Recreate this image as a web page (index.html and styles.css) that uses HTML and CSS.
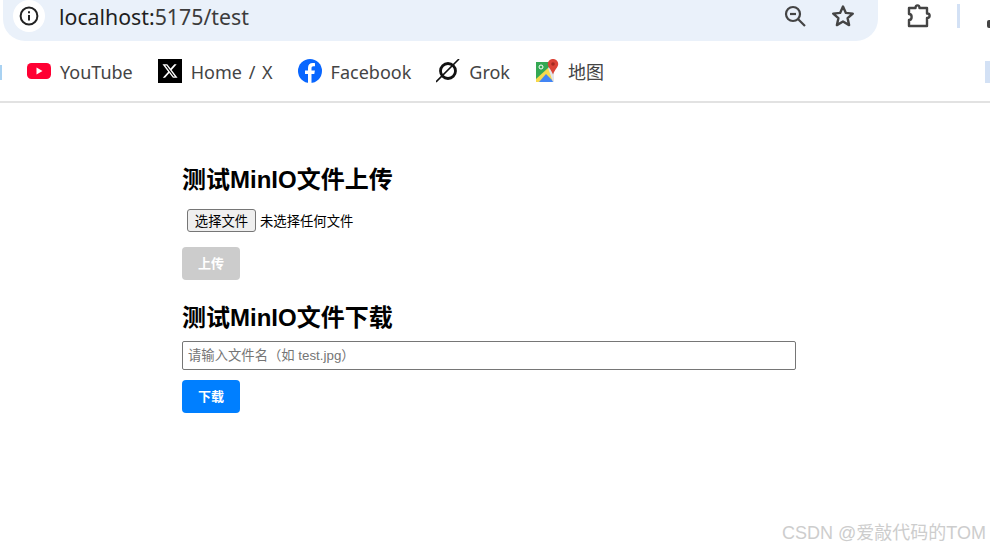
FILE: index.html
```html
<!DOCTYPE html>
<html lang="zh-CN">
<head>
    <meta charset="UTF-8">
    <title>localhost:5175/test</title>
    <link rel="stylesheet" href="styles.css">
</head>
<body>
    <header class="browser">
        <div class="toolbar">
            <div class="address-bar">
                <span class="site-info">
                    <svg width="20" height="20" viewBox="0 0 20 20" fill="none" stroke="#222" stroke-width="2"><circle cx="10" cy="10" r="8.4"/><path d="M10 9v5.6"/><path d="M10 5.2v2"/></svg>
                </span>
                <span class="url">localhost:<span class="url-dim">5175/test</span></span>
                <span class="address-actions">
                    <svg width="24" height="24" viewBox="0 0 24 24" fill="none" stroke="#444" stroke-width="2.2"><circle cx="10" cy="10" r="7"/><path d="M7 10h6"/><path d="M15 15l7 7"/></svg>
                    <svg width="24" height="24" viewBox="0 0 24 24" fill="none" stroke="#444" stroke-width="2.4" stroke-linejoin="round"><path d="M12 2.5l2.9 6.4 6.900.7-5.200 4.600 1.500 6.900-6.100-3.600-6.100 3.600 1.500-6.900L2.200 9.600l6.900-.7z"/></svg>
                </span>
            </div>
            <svg class="puzzle" width="26" height="26" viewBox="0 0 26 26" fill="none" stroke="#444" stroke-width="2.4" stroke-linejoin="round"><path d="M3 5h6.500c0-3.500 4-3.500 4 0H21v5.500c3.500 0 3.500 4.500 0 4.500v8H3v-6c3.500 0 3.500-6 0-6z"/></svg>
            <span class="divider"></span>
            <span class="avatar-edge"></span>
        </div>
        <nav class="bookmarks">
            <span class="edge-mark"></span>
            <a class="bookmark">
                <svg width="24" height="24" viewBox="0 0 24 24"><rect y="4" width="24" height="16" rx="4.500" fill="#ff0033"/><path d="M9.500 8.500v7l6-3.500z" fill="#fff"/></svg>
                <span>YouTube</span>
            </a>
            <a class="bookmark wide-words">
                <svg width="24" height="24" viewBox="0 0 24 24"><rect width="24" height="24" fill="#000"/><path transform="translate(3.600 3.600) scale(.7)" d="M18.244 2.250h3.308l-7.227 8.260 8.502 11.240H16.170l-5.214-6.817L4.990 21.750H1.680l7.730-8.835L1.254 2.250H8.080l4.713 6.231zm-1.161 17.520h1.833L7.084 4.126H5.117z" fill="#fff"/></svg>
                <span>Home / X</span>
            </a>
            <a class="bookmark">
                <svg width="24" height="24" viewBox="0 0 24 24"><circle cx="12" cy="12" r="12" fill="#0866ff"/><path d="M10 24v-9H7v-3.600h3V9c0-3.200 1.800-5 4.700-5 1.200 0 2.300.2 2.300.2v3.100h-1.500c-1.500 0-2 .9-2 1.900v2.200h3.400l-.6 3.600h-2.800v9z" fill="#fff"/></svg>
                <span>Facebook</span>
            </a>
            <a class="bookmark">
                <svg width="24" height="24" viewBox="0 0 24 24" fill="none" stroke="#111"><circle cx="12" cy="12" r="7.500" stroke-width="2.800"/><path d="M0 23L23 0" stroke-width="1.600"/></svg>
                <span>Grok</span>
            </a>
            <a class="bookmark">
                <svg width="24" height="24" viewBox="0 0 24 24"><path d="M1 3h17v20H1z" fill="#34a853"/><path d="M1 20L13 9l5 6v8H1z" fill="#f7d94c"/><path d="M4 23l7-8 8 8z" fill="#4285f4"/><path d="M13 9l6-6v20l-1 0z" fill="#e3e5e8"/><path d="M18 0c3 0 5.200 2.200 5.200 5 0 3.200-3.400 5.600-5.200 10.500C16.200 10.600 12.800 8.200 12.800 5 12.800 2.200 15 0 18 0z" fill="#db4437"/><circle cx="18" cy="5" r="1.800" fill="#a52a20"/><circle cx="6" cy="8" r="2" fill="none" stroke="#fff"/></svg>
                <span>地图</span>
            </a>
            <span class="edge-mark right"></span>
        </nav>
    </header>

    <main class="page">
        <h2>测试MinIO文件上传</h2>
        <div class="file-row">
            <button class="file-btn">选择文件</button>
            <span>未选择任何文件</span>
        </div>
        <button class="action disabled" disabled>上传</button>

        <h2 class="second">测试MinIO文件下载</h2>
        <input class="file-name" type="text" placeholder="请输入文件名（如 test.jpg）">
        <button class="action">下载</button>
    </main>

    <div class="watermark">CSDN @爱敲代码的TOM</div>
</body>
</html>
```

FILE: styles.css
```css
:root {
    --bar: #eaf1fa;
    --chrome-text: #444;
    --blue: #007fff;
}

* {
    margin: 0;
    padding: 0;
    box-sizing: border-box;
}

body {
    width: 990px;
    height: 550px;
    overflow: hidden;
    background: #fff;
    color: #000;
    font-family: 'Liberation Sans', 'Noto Sans CJK SC', sans-serif;
}

.browser {
    height: 103px;
    border-bottom: 2px solid #e2e2e2;
    font-family: 'Noto Sans', 'Noto Sans CJK SC', sans-serif;
}

.toolbar {
    height: 41px;
    display: flex;
    align-items: center;
    padding-left: 3px;
    overflow: hidden;
}

.address-bar {
    width: 875px;
    height: 41px;
    flex-shrink: 0;
    display: flex;
    align-items: center;
    background: var(--bar);
    border-radius: 0 0 22px 22px;
    padding: 0 23px 9px 10px;
}

.site-info {
    width: 32px;
    height: 32px;
    display: flex;
    align-items: center;
    justify-content: center;
    background: #fff;
    border-radius: 50%;
    flex-shrink: 0;
}

.url {
    margin-left: 14px;
    font-size: 21.3px;
    color: #1f1f1f;
}

.url-dim {
    color: #3c3c3c;
}

.address-actions {
    margin-left: auto;
    display: flex;
    gap: 24px;
}

.puzzle {
    flex-shrink: 0;
    margin: 0 0 10px 28px;
}

.divider {
    width: 3px;
    height: 24px;
    flex-shrink: 0;
    margin: 0 0 10px 25px;
    background: #d3e1f5;
}

.avatar-edge {
    width: 3px;
    height: 8px;
    flex-shrink: 0;
    margin: 7px 0 0 27px;
    background: #444;
    border-radius: 2px 0 0 2px;
}

.bookmarks {
    height: 60px;
    display: flex;
    align-items: center;
    gap: 25px;
}

.edge-mark {
    width: 2px;
    height: 15px;
    margin-top: 2px;
    background: #a9d2f2;
}

.edge-mark.right {
    width: 5px;
    height: 22px;
    margin: 2px 0 0 auto;
    background: #d3e1f5;
}

.bookmark {
    display: flex;
    align-items: center;
    gap: 9px;
    font-size: 18px;
    line-height: 26px;
    color: var(--chrome-text);
}

.bookmark span {
    padding-top: 2px;
}

.wide-words {
    word-spacing: 2px;
}

.page {
    padding: 62px 194px 0 182px;
}

h2 {
    font-size: 24px;
    line-height: 30px;
    font-weight: 700;
}

h2.second {
    margin-top: 23px;
}

.file-row {
    display: flex;
    align-items: center;
    gap: 4px;
    margin: 14px 0 15px 5px;
    font-size: 13.33px;
}

.file-btn {
    width: 69px;
    height: 23px;
    font: inherit;
    color: #000;
    background: #efefef;
    border: 1px solid #767676;
    border-radius: 3px;
}

.action {
    display: block;
    width: 58px;
    height: 33px;
    padding-bottom: 2px;
    border: none;
    border-radius: 4px;
    background: var(--blue);
    color: #fff;
    font-family: inherit;
    font-size: 13px;
    font-weight: 700;
}

.action.disabled {
    background: #ccc;
}

.file-name {
    display: block;
    width: 614px;
    height: 29px;
    margin: 8px 0 10px;
    padding: 0 5px;
    border: 1px solid #767676;
    border-radius: 2px;
    font-family: inherit;
    font-size: 13.33px;
}

.file-name::placeholder {
    color: #757575;
}

.watermark {
    position: absolute;
    right: 4px;
    bottom: 6px;
    font-size: 18px;
    color: #cdcdcd;
}
```
